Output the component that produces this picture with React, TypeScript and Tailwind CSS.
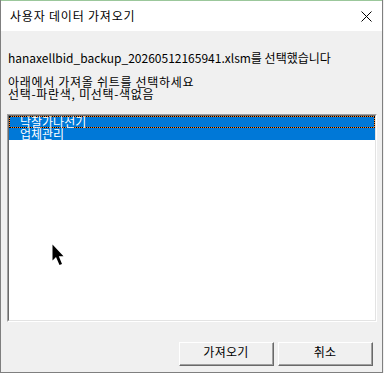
import React from "react";

const font = { fontFamily: '"Noto Sans CJK KR", "Noto Sans", sans-serif' };

function ClassicButton({ label }: { label: string }) {
  return (
    <div className="w-[95px] h-[24px] border-t border-l border-white border-r border-b border-r-[#696969] border-b-[#696969] bg-[#f0f0f0]">
      <div className="w-full h-full border-r border-b border-[#a0a0a0] flex items-center justify-center text-[12px] leading-[12px] text-black pb-[3px] tracking-[0.3px]">
        {label}
      </div>
    </div>
  );
}

export default function App() {
  return (
    <div className="w-[384px] h-[373px] bg-[#f0f0f0] overflow-hidden" style={font}>
      <div className="relative w-[383px] h-[373px] border-l border-r border-b border-[#7f7f7f] flex flex-col bg-[#f0f0f0]">
        <div className="h-[31px] bg-white flex items-center justify-between pl-[9px] pr-[9px] border-t border-[#9bc79b]">
          <span className="text-[12px] leading-[12px] text-black tracking-[0.8px]">사용자 데이터 가져오기</span>
          <svg width="11" height="11" viewBox="0 0 11 11" className="mr-[1px]">
            <path d="M0.5 0.5 L10.5 10.5 M10.5 0.5 L0.5 10.5" stroke="#000" strokeWidth="1" />
          </svg>
        </div>
        <div className="flex flex-col pl-[7px] pt-[21px] text-[12px] leading-[12px] text-black">
          <div className="h-[12px]">hanaxellbid_backup_20260512165941.xlsm를 선택했습니다</div>
          <div className="mt-[12px] h-[12px] tracking-[0.7px]">아래에서 가져올 쉬트를 선택하세요</div>
          <div className="h-[12px] tracking-[0.7px]">선택-파란색, 미선택-색없음</div>
        </div>
        <div className="ml-[6px] mt-[14px] w-[370px] h-[208px] border-t border-l border-[#a0a0a0] border-r border-b border-r-white border-b-white">
          <div className="w-full h-full border-t border-l border-[#696969] border-r border-b border-r-[#e3e3e3] border-b-[#e3e3e3] bg-white">
            <div className="relative h-[12px] bg-[#0078d7] text-white text-[12px] leading-[12px] pl-[11px]">
              <div className="absolute inset-0 border border-[#ff8728]" />
              <div className="absolute inset-0 border border-dotted border-black" />
              <span className="relative">낙찰가나선기</span>
            </div>
            <div className="h-[12px] bg-[#0078d7] text-white text-[12px] leading-[12px] pl-[11px]">
              <span className="relative">업체관리</span>
            </div>
          </div>
        </div>
        <div className="flex justify-end gap-[4px] mt-[20px] pr-[9px]">
          <ClassicButton label="가져오기" />
          <ClassicButton label="취소" />
        </div>
        <svg className="absolute left-[51px] top-[244px]" width="13" height="22" viewBox="0 0 13 22">
          <path d="M0.5 0.5 L0.5 16.5 L4 13 L7.5 21 L10 20 L6.8 12.3 L11.5 12.3 Z" fill="#000" />
        </svg>
      </div>
    </div>
  );
}
